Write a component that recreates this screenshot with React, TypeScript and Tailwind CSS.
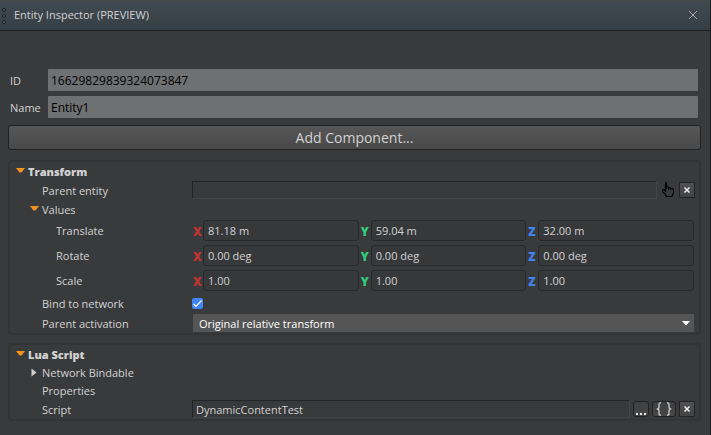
import { useState } from "react";
import type { ReactNode } from "react";

function Arrow({ open }: { open: boolean }) {
  return open ? (
    <svg width="9" height="5" viewBox="0 0 9 5" className="block" aria-hidden="true">
      <path d="M0 0H9L5.5 4.5H3.5Z" fill="#f4921e" />
    </svg>
  ) : (
    <svg width="7" height="9" viewBox="0 0 7 9" className="block" aria-hidden="true">
      <path d="M1.5 0.5L6.5 4.5L1.5 8.5Z" fill="#cfcfcf" />
    </svg>
  );
}

function Panel({ children }: { children: ReactNode }) {
  return <section className="rounded border-2 border-[#333436] pr-1">{children}</section>;
}

function PanelTitle({ children }: { children: string }) {
  return (
    <button type="button" className="flex h-[19px] items-center gap-[3px] pl-1.5 font-extrabold">
      <span className="pb-0.5">
        <Arrow open />
      </span>
      <span>{children}</span>
    </button>
  );
}

function Toggle({ open, children }: { open: boolean; children: string }) {
  return (
    <button type="button" className="flex h-[18px] items-center pl-5">
      <span className="w-3 pb-0.5">
        <Arrow open={open} />
      </span>
      <span className={open ? "pt-0.5" : ""}>{children}</span>
    </button>
  );
}

const lineEdit =
  "h-[18px] min-w-0 flex-1 border border-t-[#232425] border-l-[#232425] border-r-[#444546] border-b-[#444546] bg-[#38393a] pt-px pl-[3px] outline-none";

function ClearButton({ label }: { label: string }) {
  return (
    <button
      type="button"
      aria-label={label}
      className="flex size-4 items-center justify-center border border-[#232323] bg-linear-to-b from-[#515151] to-[#434343]"
    >
      <svg width="6" height="6" viewBox="0 0 6 6" aria-hidden="true">
        <path d="M0.5 0.5L5.5 5.5M5.5 0.5L0.5 5.5" stroke="#ededed" strokeWidth="1.5" />
      </svg>
    </button>
  );
}

const axes = [
  { name: "X", color: "text-[#c13434]" },
  { name: "Y", color: "text-[#2fd07a]" },
  { name: "Z", color: "text-[#3f83f0]" },
];

function VectorRow({ label, values }: { label: string; values: string[] }) {
  return (
    <div role="group" aria-label={label} className="flex h-[25px] items-center">
      <span className="w-[183px] pt-px pl-[46px]">{label}</span>
      <div className="mr-px grid flex-1 grid-cols-3 gap-0.5">
        {axes.map((axis, i) => (
          <label key={axis.name} className="flex items-center">
            <span className={`w-2.5 pt-0.5 text-[12px] font-extrabold ${axis.color}`}>{axis.name}</span>
            <input
              defaultValue={values[i]}
              className="h-[21px] min-w-0 flex-1 rounded-[3px] border border-[#28292a] bg-[#37383a] pl-1 outline-none"
            />
          </label>
        ))}
      </div>
    </div>
  );
}

export default function App() {
  const [bound, setBound] = useState(true);

  return (
    <main className="min-h-screen border-r border-[#1f2021] bg-[#393a3c] font-['Open_Sans',sans-serif] text-[11px] leading-4 text-[#d2d2d2]">
      <header className="flex h-[31px] items-center border-t border-b border-t-[#434746] border-b-[#1e2022] bg-linear-to-b from-[#414951] to-[#363e46] pr-3">
        <svg width="14" height="18" viewBox="0 0 14 18" aria-hidden="true">
          {[3, 9, 15].map((y) => (
            <circle key={y} cx="4" cy={y} r="1.5" fill="#566069" stroke="#1c2024" />
          ))}
        </svg>
        <h1 className="flex-1 pb-px">Entity Inspector (PREVIEW)</h1>
        <button type="button" aria-label="Close" className="pb-0.5">
          <svg width="10" height="10" viewBox="0 0 10 10" className="block" aria-hidden="true">
            <path d="M1 1L9 9M9 1L1 9" stroke="#a2a6aa" />
          </svg>
        </button>
      </header>

      <div className="flex flex-col gap-[5px] pt-[38px] pr-3 pl-2.5">
        <div className="flex items-center">
          <label htmlFor="entity-id" className="w-[38px] pt-0.5">ID</label>
          <input
            id="entity-id"
            readOnly
            defaultValue="16629829839324073847"
            className="h-[22px] min-w-0 flex-1 rounded-[1px] bg-[#6f7072] pl-[3px] text-[12px] text-black outline-none"
          />
        </div>
        <div className="flex items-center">
          <label htmlFor="entity-name" className="w-[38px] pt-0.5">Name</label>
          <input
            id="entity-name"
            defaultValue="Entity1"
            className="h-[22px] min-w-0 flex-1 rounded-[1px] bg-[#6f7072] pl-[3px] text-[12px] text-black outline-none"
          />
        </div>
      </div>

      <div className="flex flex-col pt-[7px] pr-[9px] pb-3.5 pl-2">
        <button
          type="button"
          className="mb-2.5 h-[25px] rounded-[3px] border border-[#202122] bg-linear-to-b from-[#565656] to-[#494949] text-[14px]"
        >
          Add Component...
        </button>

        <div className="flex flex-col gap-2">
          <Panel>
            <PanelTitle>Transform</PanelTitle>
            <div className="flex h-[19px] items-start">
              <label htmlFor="parent-entity" className="w-[182px] pt-0.5 pl-8">Parent entity</label>
              <input id="parent-entity" className={lineEdit} />
              <button type="button" aria-label="Pick entity" className="mx-[5px] mt-px">
                <svg width="12" height="15" viewBox="0 0 12 15" className="block" fill="none" stroke="#060606" strokeWidth="1.2" strokeLinejoin="round" aria-hidden="true">
                  <path d="M3.5 10V1.5Q3.5 .5 4 .5Q4.5 .5 4.5 1.5V7M4.5 4.5H5.5Q6.5 4.5 6.5 5.5V7.5M6.5 5.5H7.5Q8.5 5.5 8.5 6.5V8M8.5 6.5H9.5Q11.5 6.5 11.5 8V11L10.5 12.5V13.5L9.5 14.5H4.5L3.5 13.5V12.5L.5 9.5V8Q2 7 3.5 9" />
                </svg>
              </button>
              <span className="mt-px">
                <ClearButton label="Clear parent entity" />
              </span>
            </div>
            <Toggle open>Values</Toggle>
            <VectorRow label="Translate" values={["81.18 m", "59.04 m", "32.00 m"]} />
            <VectorRow label="Rotate" values={["0.00 deg", "0.00 deg", "0.00 deg"]} />
            <VectorRow label="Scale" values={["1.00", "1.00", "1.00"]} />
            <div className="flex h-[21px] items-center">
              <label htmlFor="bind" className="w-[182px] pt-px pl-8">Bind to network</label>
              <span className="grid">
                <input
                  id="bind"
                  type="checkbox"
                  checked={bound}
                  onChange={(e) => setBound(e.target.checked)}
                  className="col-start-1 row-start-1 size-[11px] appearance-none rounded-[2px] bg-[#555] checked:bg-[#4285f4]"
                />
                {bound && (
                  <svg width="11" height="11" viewBox="0 0 11 11" className="pointer-events-none col-start-1 row-start-1" aria-hidden="true">
                    <path d="M1.5 6L4 8.5L9.5 2.5" fill="none" stroke="#fff" strokeWidth="1.2" />
                  </svg>
                )}
              </span>
            </div>
            <div className="flex h-[19px] items-start">
              <label htmlFor="activation" className="w-[183px] pt-0.5 pl-8">Parent activation</label>
              <span className="mr-px grid flex-1 items-center">
                <select
                  id="activation"
                  className="col-start-1 row-start-1 h-[18px] w-full appearance-none bg-[#555] pt-px pl-1.5 text-white outline-none"
                >
                  <option>Original relative transform</option>
                </select>
                <svg width="8" height="4" viewBox="0 0 8 4" className="pointer-events-none col-start-1 row-start-1 mr-1 justify-self-end" aria-hidden="true">
                  <path d="M0 0H8L4.5 4H3.5Z" fill="#fff" />
                </svg>
              </span>
            </div>
          </Panel>

          <Panel>
            <PanelTitle>Lua Script</PanelTitle>
            <Toggle open={false}>Network Bindable</Toggle>
            <div className="flex h-[18px] items-center pl-8">Properties</div>
            <div className="flex h-[19px] items-start">
              <label htmlFor="script" className="w-[182px] pt-0.5 pl-8">Script</label>
              <input id="script" defaultValue="DynamicContentTest" className={lineEdit} />
              <div className="mt-px ml-[3px] flex gap-[3px]">
                <button
                  type="button"
                  aria-label="Browse"
                  className="flex size-4 items-center justify-center rounded-[3px] border border-[#212223] bg-linear-to-b from-[#3e3f40] to-[#474747]"
                >
                  <svg width="10" height="14" viewBox="0 0 10 14" aria-hidden="true">
                    <path d="M0 11h2v2H0zM4 11h2v2H4zM8 11h2v2H8z" fill="#e4e4e4" />
                  </svg>
                </button>
                <button
                  type="button"
                  aria-label="Edit script"
                  className="flex h-4 w-6 items-center justify-center rounded-[3px] border border-[#212223] bg-linear-to-b from-[#3e3f40] to-[#474747]"
                >
                  <svg width="16" height="14" viewBox="0 0 16 14" fill="none" stroke="#c2c2c2" strokeWidth="1.4" aria-hidden="true">
                    <path d="M5 .7Q3 .7 3 2.5V5Q3 7 .7 7Q3 7 3 9V11.5Q3 13.3 5 13.3M11 .7Q13 .7 13 2.5V5Q13 7 15.3 7Q13 7 13 9V11.5Q13 13.3 11 13.3" />
                  </svg>
                </button>
                <ClearButton label="Clear script" />
              </div>
            </div>
          </Panel>
        </div>
      </div>
    </main>
  );
}
